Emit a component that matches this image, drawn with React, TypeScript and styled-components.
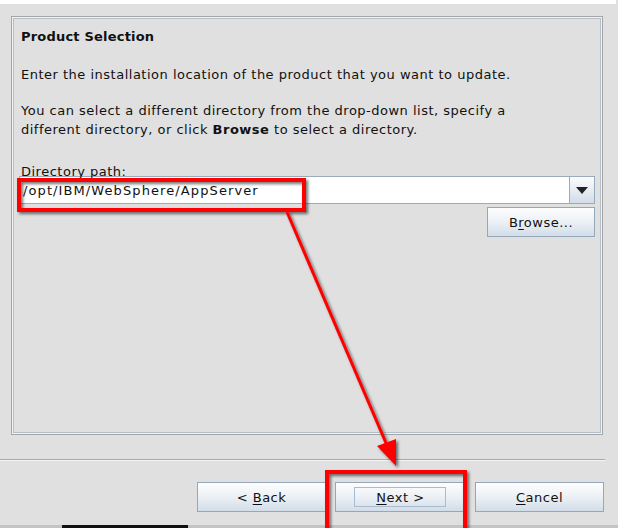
import React from "react";
import styled, { createGlobalStyle } from "styled-components";

const Global = createGlobalStyle`
  html, body { margin: 0; padding: 0; background: #e0e0e0; }
  body { font-family: "DejaVu Sans", "Liberation Sans", sans-serif; }
`;

const Window = styled.div`
  position: relative;
  width: 618px;
  height: 528px;
  background: #e0e0e0;
  overflow: hidden;
  display: flex;
  flex-direction: column;
  color: #111;
  font-size: 13px;
  letter-spacing: 0.5px;
`;

const TopStrip = styled.div`
  height: 4px;
  width: 616px;
  background: #fff;
`;

const PanelArea = styled.div`
  padding: 12px 15px 0 11px;
`;

const Panel = styled.section`
  height: 419px;
  box-sizing: border-box;
  border: 1px solid #a6a6a6;
  box-shadow: inset 0 0 0 1px #f2f2f2, inset 0 0 0 2px #b3c0cb;
  padding: 10px 7px 0 9px;
`;

const Title = styled.h2`
  margin: 0;
  font-size: 13px;
  font-weight: bold;
  letter-spacing: 0.2px;
  line-height: 19px;
`;

const Para = styled.p<{ $gap: number }>`
  margin: ${(p) => p.$gap}px 0 0;
  line-height: 19px;
  white-space: nowrap;
`;

const Label = styled.div`
  margin-top: 29px;
  line-height: 8px;
`;

const Combo = styled.div`
  display: flex;
  height: 28px;
  border: 1px solid #9aabbb;
  box-sizing: border-box;
  background: #fff;
  margin-left: -2px;
`;

const ComboText = styled.div`
  flex: 1;
  display: flex;
  align-items: center;
  padding-left: 3px;
  letter-spacing: 1.1px;
`;

const ComboArrow = styled.div`
  width: 24px;
  border-left: 1px solid #9aabbb;
  background: linear-gradient(#fbfcfd, #d2dde8);
  display: flex;
  align-items: center;
  justify-content: center;
`;

const BrowseRow = styled.div`
  display: flex;
  justify-content: flex-end;
  margin-top: 3px;
`;

const Button = styled.button<{ $w: number; $focus?: boolean }>`
  position: relative;
  width: ${(p) => p.$w}px;
  height: 30px;
  border: 1px solid #95a8bb;
  border-radius: 0;
  background: linear-gradient(#fdfdfe 0%, #eef2f6 45%, #d2dde8 100%);
  font-family: "DejaVu Sans", "Liberation Sans", sans-serif;
  font-size: 13px;
  letter-spacing: 0.5px;
  color: #111;
  padding: 0;
  ${(p) =>
    p.$focus &&
    `&::after {
      content: "";
      position: absolute;
      left: 18px; right: 19px; top: 4px; bottom: 4px;
      border: 1px solid #a9bccf;
    }`}
  u { text-decoration: underline; text-underline-offset: 2px; }
`;

const Separator = styled.div`
  margin-top: 24px;
  width: 605px;
  height: 1px;
  background: #a9a9a9;
  border-bottom: 1px solid #f4f4f4;
`;

const ButtonRow = styled.div`
  display: flex;
  justify-content: flex-end;
  gap: 9px;
  padding-right: 14px;
  margin-top: 21px;
`;

const Footer = styled.div`
  margin-top: auto;
  height: 3px;
  background: #c4c4c4;
  display: flex;
`;

const FooterBlock = styled.div`
  margin-left: 62px;
  width: 126px;
  background: #111;
`;

const Overlay = styled.svg`
  position: absolute;
  left: 0;
  top: 0;
  pointer-events: none;
`;

export default function App() {
  return (
    <>
      <Global />
      <Window>
        <TopStrip />
        <PanelArea>
          <Panel>
            <Title>Product Selection</Title>
            <Para $gap={19}>
              Enter the installation location of the product that you want to update.
            </Para>
            <Para $gap={17}>
              You can select a different directory from the drop-down list, specify a
              <br />
              different directory, or click <b>Browse</b> to select a directory.
            </Para>
            <Label>Directory path:</Label>
            <Combo>
              <ComboText>/opt/IBM/WebSphere/AppServer</ComboText>
              <ComboArrow>
                <svg width="12" height="7" viewBox="0 0 12 7">
                  <polygon points="0,0 12,0 6,7" fill="#222" />
                </svg>
              </ComboArrow>
            </Combo>
            <BrowseRow>
              <Button $w={108}>
                B<u>r</u>owse...
              </Button>
            </BrowseRow>
          </Panel>
        </PanelArea>
        <Separator />
        <ButtonRow>
          <Button $w={129}>
            &lt; <u>B</u>ack
          </Button>
          <Button $w={131} $focus>
            <u>N</u>ext &gt;
          </Button>
          <Button $w={129}>
            <u>C</u>ancel
          </Button>
        </ButtonRow>
        <Footer>
          <FooterBlock />
        </Footer>
        <Overlay width={618} height={528}>
          <defs>
            <filter id="sh" x="-20%" y="-20%" width="140%" height="140%">
              <feDropShadow dx="2" dy="2" stdDeviation="1.6" floodColor="#000" floodOpacity="0.55" />
            </filter>
          </defs>
          <g filter="url(#sh)" fill="none" stroke="#f00">
            <rect x={19} y={180} width={285} height={30} strokeWidth={4} />
            <rect x={327} y={472} width={138} height={62} strokeWidth={4} />
            <line x1={287} y1={212} x2={389} y2={450} strokeWidth={3} />
            <polygon points="396,466 377,446 396,439" fill="#f00" stroke="none" />
          </g>
        </Overlay>
      </Window>
    </>
  );
}
